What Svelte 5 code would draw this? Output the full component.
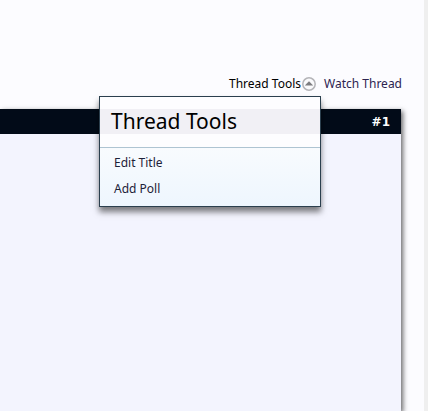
<script>
	let menuOpen = $state(true);

	const tools = [
		{ label: 'Edit Title', href: '#edit-title' },
		{ label: 'Add Poll', href: '#add-poll' }
	];

	function toggleMenu() {
		menuOpen = !menuOpen;
	}
</script>

<div class="page">
	<nav class="thread-nav" aria-label="Thread">
		<button
			type="button"
			class="trigger"
			aria-expanded={menuOpen}
			aria-controls="thread-tools"
			onclick={toggleMenu}
		>
			Thread Tools
			<svg class="arrow" viewBox="0 0 14 14" aria-hidden="true">
				<circle cx="7" cy="7" r="6.2" fill="#fafafc" stroke="#b4b4b8" stroke-width="1.5" />
				<path d="M2.8 8.4 L7 4.2 L11.2 8.4 Z" fill="#7c7c80" />
			</svg>
		</button>
		<a class="watch" href="#watch">Watch Thread</a>

		{#if menuOpen}
			<div class="menu" id="thread-tools">
				<h3>Thread Tools</h3>
				<ul>
					{#each tools as tool}
						<li><a href={tool.href}>{tool.label}</a></li>
					{/each}
				</ul>
			</div>
		{/if}
	</nav>

	<article class="post">
		<header class="post-header">
			<a href="#post-1">#1</a>
		</header>
	</article>
</div>

<style>
	:global(body) {
		background: #efefef;
	}

	.page {
		box-sizing: border-box;
		display: flex;
		flex-direction: column;
		min-height: 100vh;
		margin-right: 4px;
		padding: 76px 22px 0 0;
		overflow: hidden;
		background: #fcfcff;
		font-family: 'Trebuchet MS', 'Noto Sans', sans-serif;
		font-size: 12px;
		line-height: 16px;
		color: #1d2238;
	}

	a {
		color: inherit;
		text-decoration: none;
	}

	.thread-nav {
		position: relative;
		z-index: 1;
		display: flex;
		justify-content: flex-end;
		gap: 8px;
		margin-bottom: 17px;
	}

	.trigger {
		display: flex;
		align-items: center;
		gap: 1px;
		padding: 0;
		border: none;
		background: none;
		font: inherit;
		color: #000;
		cursor: pointer;
	}

	.arrow {
		width: 14px;
		height: 14px;
	}

	.watch {
		color: #2c2350;
	}

	.menu {
		position: absolute;
		top: calc(100% + 4px);
		right: 81px;
		box-sizing: border-box;
		width: 222px;
		border: 1px solid #2b3f4e;
		background: #fdfdff;
		box-shadow: 0 5px 6px rgba(0, 0, 0, 0.5);
	}

	h3 {
		margin: 12px 0 13px;
		padding: 0 11px;
		background: #f1f0f5;
		font-size: 21px;
		line-height: 25px;
		font-weight: 400;
		color: #000;
	}

	ul {
		margin: 0;
		padding: 2px 0 4px;
		border-top: 1px solid #aec4d2;
		background: linear-gradient(#f8fbfe, #eef6fe);
		list-style: none;
	}

	li a {
		display: block;
		padding: 5px 14px;
	}

	li a:hover {
		background: #e2effa;
	}

	.post {
		flex: 1;
		margin-right: 1px;
		background: #f3f4fe;
		box-shadow: 2px 2px 5px rgba(0, 0, 0, 0.6);
	}

	.post-header {
		padding: 5px 11px 4px;
		background: #020b18;
		font-family: Verdana, 'DejaVu Sans', sans-serif;
		text-align: right;
		font-weight: 700;
		color: #fff;
	}
</style>
